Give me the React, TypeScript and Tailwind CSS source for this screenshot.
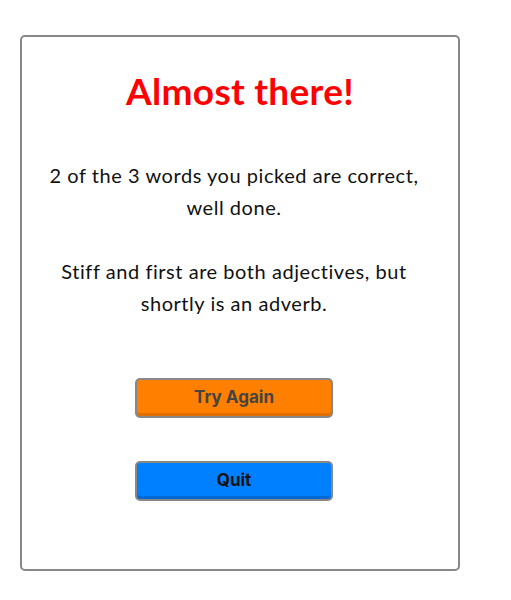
export default function App() {
  return (
    <div className="min-h-[600px] w-[511px] bg-white pt-[35px] pl-[20px]" style={{ fontFamily: "Lato, 'Open Sans', sans-serif" }}>
      <div className="w-[440px] h-[536px] border-2 border-[#888888] rounded-[5px] flex flex-col items-center">
        <h1 className="mt-[28px] text-[37px] leading-[52px] font-bold text-[#ff0000] tracking-[0.3px]">Almost there!</h1>
        <div className="mt-[42px] mr-[12px] w-[384px] text-center text-[20px] leading-[32px] tracking-[0.55px] text-[#111111]">
          <p>2 of the 3 words you picked are correct, well done.</p>
          <p className="mt-[32px]">Stiff and first are both adjectives, but shortly is an adverb.</p>
        </div>
        <button className="mt-[59px] mr-[12px] w-[198px] h-[40px] border-2 border-[#888888] rounded-[5px] bg-[#ff8000] shadow-[inset_0_-3px_0_#e06f00] text-[17px] font-bold text-[#444444]" style={{ fontFamily: "Inter, sans-serif" }}>Try Again</button>
        <button className="mt-[43px] mr-[12px] w-[198px] h-[40px] border-2 border-[#888888] rounded-[5px] bg-[#0080ff] shadow-[inset_0_-3px_0_#006ad4] text-[17px] font-bold text-[#111111]" style={{ fontFamily: "Inter, sans-serif" }}>Quit</button>
      </div>
    </div>
  );
}
